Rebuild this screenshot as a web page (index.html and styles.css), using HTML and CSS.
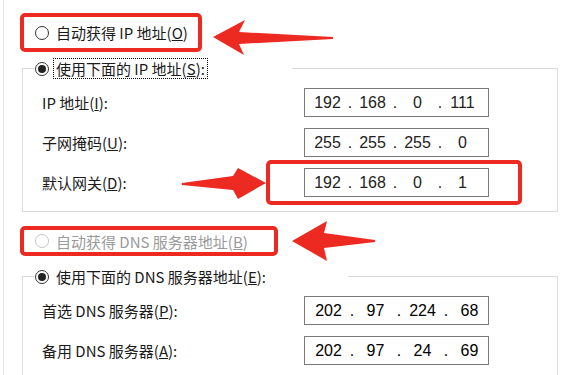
FILE: index.html
```html
<!DOCTYPE html>
<html>
<head>
  <meta charset="UTF-8">
  <title>IP 设置</title>
  <link rel="stylesheet" href="styles.css">
</head>
<body>
  <div class="page">
    <div class="callout-row callout-row--top">
      <div class="mark mark--auto-ip">
        <span class="radio"></span>
        <span class="radio-text">自动获得 IP 地址(<u>O</u>)</span>
      </div>
      <svg class="arrow arrow--top" width="126" height="40" viewBox="0 0 126 40">
        <path d="M3 19 L35 2 L29 14 L123 19 L123 21 L29 26 L34 37 Z"/>
      </svg>
    </div>

    <div class="group group--ip">
      <div class="group-head">
        <span class="seg"></span>
        <span class="radio radio--on"></span>
        <span class="radio-text radio-text--focus">使用下面的 IP 地址(<u>S</u>):</span>
        <span class="rule rule--ip"></span>
      </div>
      <div class="group-body">
        <div class="field-row">
          <span class="field-label">IP 地址(<u>I</u>):</span>
          <div class="ip-box">
            <span class="oct">192</span><span class="dot">.</span><span class="oct">168</span><span class="dot">.</span><span class="oct">0</span><span class="dot">.</span><span class="oct">111</span>
          </div>
        </div>
        <div class="field-row">
          <span class="field-label">子网掩码(<u>U</u>):</span>
          <div class="ip-box">
            <span class="oct">255</span><span class="dot">.</span><span class="oct">255</span><span class="dot">.</span><span class="oct">255</span><span class="dot">.</span><span class="oct">0</span>
          </div>
        </div>
        <div class="field-row">
          <span class="field-label">默认网关(<u>D</u>):</span>
          <div class="ip-box">
            <span class="oct">192</span><span class="dot">.</span><span class="oct">168</span><span class="dot">.</span><span class="oct">0</span><span class="dot">.</span><span class="oct">1</span>
            <span class="mark mark--gateway"></span>
            <svg class="arrow arrow--gateway" width="88" height="36" viewBox="0 0 88 36">
              <path d="M2 17 L53 10 L58 2 L86 17 L58 33 L53 24 L2 19 Z"/>
            </svg>
          </div>
        </div>
      </div>
    </div>

    <div class="callout-row callout-row--dns">
      <div class="mark mark--auto-dns">
        <span class="radio radio--disabled"></span>
        <span class="radio-text radio-text--disabled">自动获得 DNS 服务器地址(<u>B</u>)</span>
      </div>
      <svg class="arrow arrow--dns" width="88" height="44" viewBox="0 0 88 44">
        <path d="M2 22 L37 2 L34 14 L85 21 L85 23 L34 29 L37 42 Z"/>
      </svg>
    </div>

    <div class="group group--dns">
      <div class="group-head">
        <span class="seg"></span>
        <span class="radio radio--on"></span>
        <span class="radio-text">使用下面的 DNS 服务器地址(<u>E</u>):</span>
        <span class="rule rule--dns"></span>
      </div>
      <div class="group-body">
        <div class="field-row">
          <span class="field-label">首选 DNS 服务器(<u>P</u>):</span>
          <div class="ip-box ip-box--dns">
            <span class="oct">202</span><span class="dot">.</span><span class="oct">97</span><span class="dot">.</span><span class="oct">224</span><span class="dot">.</span><span class="oct">68</span>
          </div>
        </div>
        <div class="field-row">
          <span class="field-label">备用 DNS 服务器(<u>A</u>):</span>
          <div class="ip-box ip-box--dns">
            <span class="oct">202</span><span class="dot">.</span><span class="oct">97</span><span class="dot">.</span><span class="oct">24</span><span class="dot">.</span><span class="oct">69</span>
          </div>
        </div>
      </div>
    </div>
  </div>
</body>
</html>
```

FILE: styles.css
```css
body {
  margin: 0;
  background-color: #fff;
  font-family: "Noto Sans CJK SC", sans-serif;
  font-size: 15px;
  color: #1a1a1a;
}

.page {
  margin-left: 3px;
  border-left: 1px solid #e2e2e2;
  height: 375px;
  padding-top: 13px;
  box-sizing: border-box;
  overflow: hidden;
}

/* red annotation boxes and arrows */
.callout-row {
  display: flex;
  align-items: flex-start;
}

.callout-row--dns {
  align-items: center;
  margin-top: 7px;
}

.mark {
  display: flex;
  align-items: center;
  box-sizing: border-box;
  padding-left: 11px;
  border: 4px solid #ec2a22;
  border-radius: 5px;
}

.mark--auto-ip {
  margin-left: 16px;
  width: 182px;
  height: 39px;
}

.mark--auto-dns {
  margin-left: 16px;
  width: 258px;
  height: 30px;
}

.mark--gateway {
  position: absolute;
  left: -39px;
  top: -9px;
  width: 256px;
  height: 45px;
}

.arrow {
  fill: #ec2a22;
  flex: none;
}

.arrow--top {
  margin-left: 8px;
  margin-top: 5px;
}

.arrow--dns {
  margin-left: 12px;
}

.arrow--gateway {
  position: absolute;
  left: -125px;
  top: -3px;
}

/* radios */
.radio {
  flex: none;
  display: flex;
  align-items: center;
  justify-content: center;
  width: 14px;
  height: 14px;
  box-sizing: border-box;
  border: 1px solid #333;
  border-radius: 50%;
  background-color: #fff;
}

.radio--on::after {
  content: "";
  width: 8px;
  height: 8px;
  border-radius: 50%;
  background-color: #222;
}

.radio--disabled {
  border-color: #c6c6c6;
}

.radio-text {
  margin-left: 4px;
  padding: 0 2px;
  border: 1px dotted transparent;
  line-height: 19px;
  white-space: nowrap;
}

.radio-text--focus {
  border-color: #000;
}

.radio-text--disabled {
  color: #9a9a9a;
}

/* group boxes */
.group {
  display: flex;
  flex-direction: column;
  margin-left: 18px;
  width: 536px;
  box-sizing: border-box;
  border: 1px solid #dcdcdc;
  border-top: none;
}

.group--ip {
  margin-top: 10px;
}

.group--dns {
  margin-top: 13px;
}

.group-head {
  display: flex;
  align-items: center;
  height: 21px;
  margin-top: -10px; /* header sits on the top edge */
}

.seg {
  width: 11px;
  height: 1px;
  background-color: #dcdcdc;
  margin-right: 1px;
}

.rule {
  flex: 1;
  height: 1px;
  background-color: #dcdcdc;
}

.rule--ip {
  margin-left: 84px;
}

.rule--dns {
  margin-left: 79px;
}

.group-body {
  display: flex;
  flex-direction: column;
  gap: 11px;
  padding: 9px 0 14px 19px;
}

.field-row {
  display: flex;
  align-items: center;
}

.field-label {
  flex: none;
  width: 262px;
  white-space: nowrap;
}

/* ip address control */
.ip-box {
  position: relative;
  display: flex;
  align-items: center;
  width: 185px;
  height: 29px;
  box-sizing: border-box;
  padding-left: 3px;
  border: 1px solid #7a7a7a;
  font-family: "Liberation Sans", sans-serif;
  font-size: 16px;
  color: #222;
}

.oct {
  flex: none;
  width: 39px;
  text-align: center;
}

.dot {
  flex: none;
  width: 6px;
  text-align: center;
}

.ip-box--dns {
  color: #000;
}

.ip-box--dns .oct {
  width: 41px;
}
```
